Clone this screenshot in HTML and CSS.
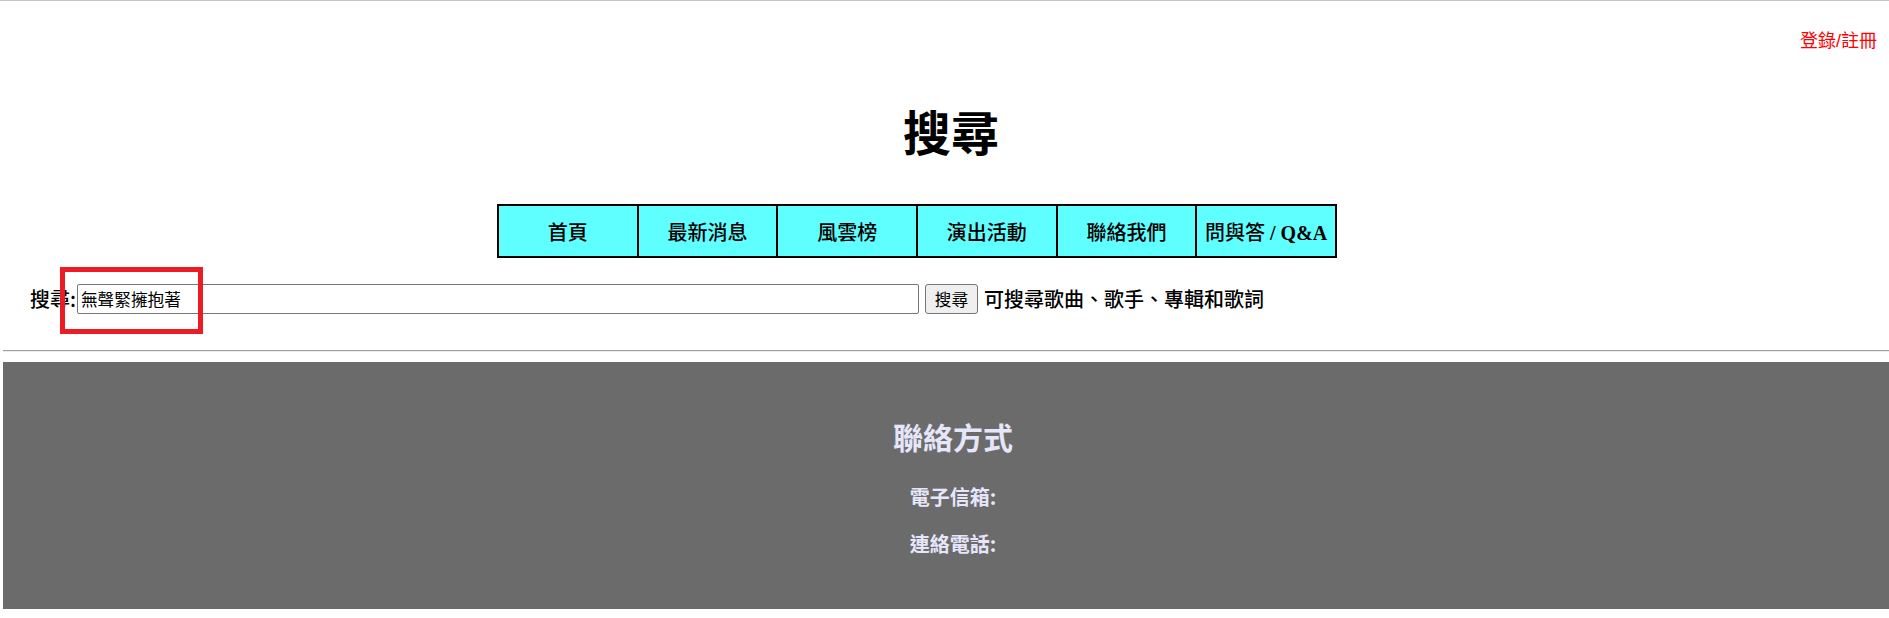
FILE: index.html
```html
<!DOCTYPE html>
<html lang="zh-Hant">
<head>
<meta charset="utf-8">
<title>搜尋</title>
<link rel="stylesheet" href="styles.css">
</head>
<body>
<div class="page">
  <div class="topbar"><a class="login" href="#">登錄/註冊</a></div>
  <h1 class="title">搜尋</h1>
  <table class="nav">
    <tr>
      <th>首頁</th>
      <th>最新消息</th>
      <th>風雲榜</th>
      <th>演出活動</th>
      <th>聯絡我們</th>
      <th>問與答<span class="latin"> / Q&amp;A</span></th>
    </tr>
  </table>
  <form class="search">
    <label class="search-label">搜尋:</label>
    <input class="search-input" type="text" value="無聲緊擁抱著">
    <button class="search-btn" type="button">搜尋</button>
    <span class="hint">可搜尋歌曲、歌手、專輯和歌詞</span>
    <div class="highlight"></div>
  </form>
  <hr class="divider">
  <footer class="footer">
    <h2 class="footer-title">聯絡方式</h2>
    <p class="footer-line">電子信箱:</p>
    <p class="footer-line second">連絡電話:</p>
  </footer>
</div>
</body>
</html>
```

FILE: styles.css
```css
html, body {
  margin: 0;
  padding: 0;
  background: #ffffff;
}

body {
  font-family: "Noto Sans CJK TC", "Liberation Sans", sans-serif;
  font-size: 20px;
  color: #000;
  border-top: 1px solid #c4c4c4;
}

.page {
  display: flex;
  flex-direction: column;
}

.topbar {
  display: flex;
  justify-content: flex-end;
  padding: 27px 12px 0 0;
  height: 26px;
}

.login {
  font-family: "Liberation Sans", "Noto Sans CJK TC", sans-serif;
  font-size: 18px;
  line-height: 26px;
  color: #ff0000;
  text-decoration: none;
}

.title {
  margin: 48px 0 0 13px;
  font-size: 48px;
  line-height: 56px;
  font-weight: bold;
  text-align: center;
}

.nav {
  align-self: flex-start;
  width: 840px;
  table-layout: fixed;
  margin: 46px 0 0 497px;
  border: 1px solid #000;
  border-collapse: separate;
  border-spacing: 0;
  background: #60ffff;
}

.nav th {
  height: 50px;
  padding: 0;
  border: 1px solid #000;
  font-size: 20px;
  font-weight: 500;
  text-align: center;
  vertical-align: middle;
  white-space: nowrap;
}

.nav .latin {
  font-family: "Liberation Serif", serif;
  font-weight: bold;
}

.search {
  position: relative;
  display: flex;
  align-items: center;
  margin: 26px 0 0 0;
  padding-left: 30px;
  height: 30px;
}

.search-label {
  font-size: 20px;
  font-weight: 500;
  line-height: 30px;
  margin-right: 1px;
}

.search-input {
  box-sizing: border-box;
  width: 842px;
  height: 30px;
  margin: 0;
  padding: 0 3px;
  border: 1px solid #767676;
  border-radius: 2px;
  font-family: "Noto Sans CJK TC", sans-serif;
  font-size: 16.67px;
  color: #000;
}

.search-btn {
  box-sizing: border-box;
  width: 53px;
  height: 30px;
  margin: 0 0 0 6px;
  padding: 0;
  border: 1px solid #767676;
  border-radius: 3px;
  background: #efefef;
  font-family: "Noto Sans CJK TC", sans-serif;
  font-size: 16.67px;
  color: #000;
}

.hint {
  margin-left: 6px;
  font-size: 20px;
  font-weight: 500;
  line-height: 30px;
}

.highlight {
  position: absolute;
  left: 60px;
  top: -17px;
  width: 143px;
  height: 67px;
  box-sizing: border-box;
  border: 5px solid #ed1c24;
}

.divider {
  margin: 36px 0 0 3px;
  height: 0;
  border: 0;
  border-top: 1px solid #9c9c9c;
  border-bottom: 1px solid #eeeeee;
}

.footer {
  margin: 10px 0 0 3px;
  padding: 54px 0 50px 14px;
  background: #6b6b6b;
  color: #e6e6fa;
  display: flex;
  flex-direction: column;
  align-items: center;
}

.footer-title {
  margin: 0;
  font-size: 30px;
  line-height: 40px;
  font-weight: bold;
}

.footer-line {
  margin: 26px 0 0 0;
  font-size: 20px;
  line-height: 30px;
  font-weight: bold;
}

.footer-line.second {
  margin-top: 17px;
}
```
